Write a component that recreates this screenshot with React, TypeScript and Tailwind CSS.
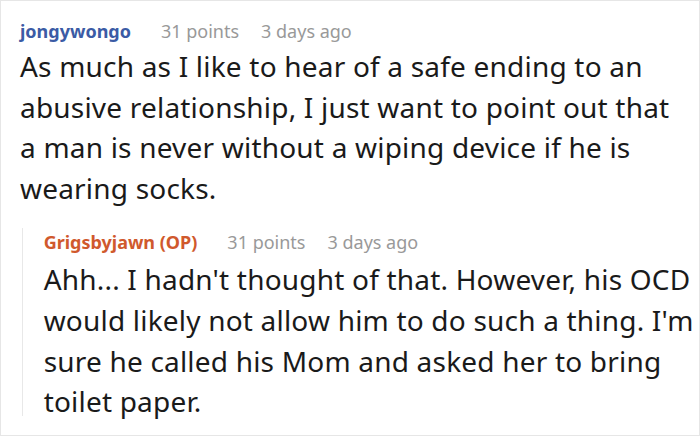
export default function App() {
  return (
    <div className="w-[700px] h-[436px] bg-white border border-[#e6e6e6] overflow-hidden" style={{ fontFamily: '"Noto Sans", sans-serif' }}>
      <div className="pl-[19px] pt-[16px]">
        <div className="flex items-baseline text-[18px] leading-[28px]">
          <span className="font-bold text-[#3b5ba5]">jongywongo</span>
          <span className="ml-[30px] text-[#999999]">31 points</span>
          <span className="ml-[22px] text-[#999999]">3 days ago</span>
        </div>
        <p className="text-[28px] leading-[40.6px] text-[#1a1a1a] mt-[1px] pr-[20px] tracking-[0.2px]">
          As much as I like to hear of a safe ending to an abusive relationship, I just want to point out that a man is never without a wiping device if he is wearing socks.
        </p>
        <div className="flex mt-[20px]">
          <div className="w-[2px] bg-[#e8e8e8] ml-[2px] mr-[21px] mb-[6px]" />
          <div>
            <div className="flex items-baseline text-[18px] leading-[28px]">
              <span className="font-bold text-[#d0592d]">Grigsbyjawn (OP)</span>
              <span className="ml-[30px] text-[#999999]">31 points</span>
              <span className="ml-[22px] text-[#999999]">3 days ago</span>
            </div>
            <p className="text-[28px] leading-[40.6px] text-[#1a1a1a] mt-[3px] pr-[4px] tracking-[0.2px]">
              Ahh... I hadn't thought of that. However, his OCD would likely not allow him to do such a thing. I'm sure he called his Mom and asked her to bring toilet paper.
            </p>
          </div>
        </div>
      </div>
    </div>
  );
}
